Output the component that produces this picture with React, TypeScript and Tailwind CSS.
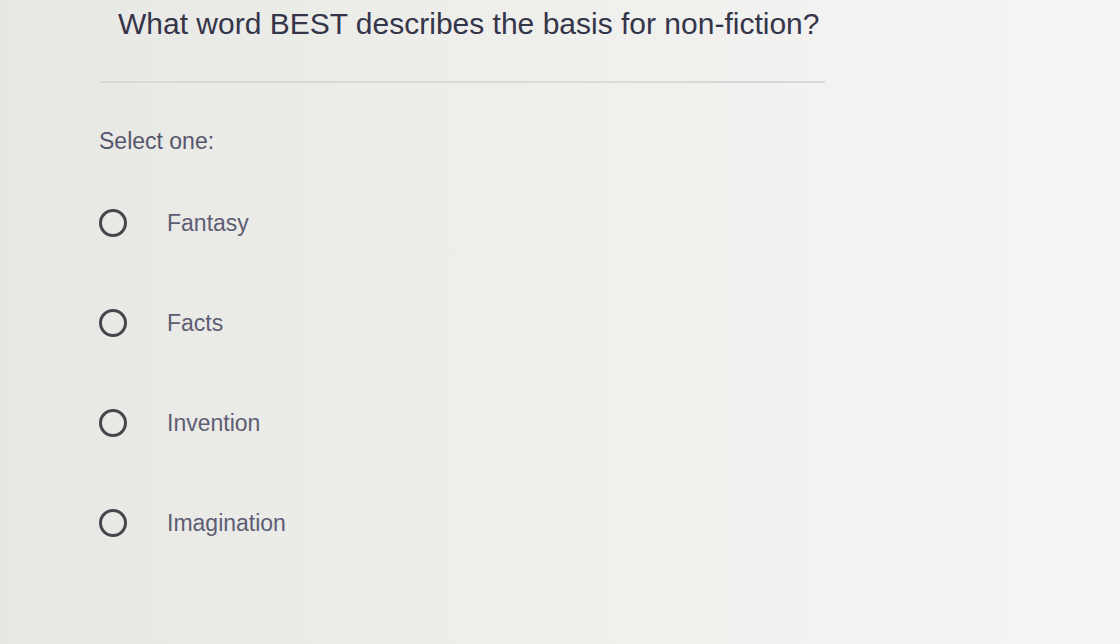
import React from 'react';

const options = ['Fantasy', 'Facts', 'Invention', 'Imagination'];

const Radio = () => (
  <span className="block w-[28px] h-[28px] rounded-full border-[3px] border-[#46464c] shrink-0" />
);

const App = () => {
  return (
    <div
      className="w-[1120px] h-[644px] overflow-hidden bg-linear-to-r from-[#e7e7e3] via-[#efefec] to-[#f6f5f5]"
      style={{ fontFamily: '"Liberation Sans", Arial, sans-serif' }}>
      <div className="w-[726px] ml-[99px]">
        <h1 className="pl-[19px] pt-[6px] text-[30px] leading-[36px] text-[#35354a] font-normal">
          What word BEST describes the basis for non-fiction?
        </h1>
        <div className="mt-[39px] h-[2px] bg-[#d9d9d8]" />
        <p className="mt-[44px] text-[23px] leading-[28px] text-[#56566c]">Select one:</p>
        <ul className="mt-[54px] flex flex-col gap-[72px]">
          {options.map(option => (
            <li key={option} className="flex items-center h-[28px]">
              <Radio />
              <span className="ml-[40px] text-[23px] leading-[28px] text-[#5d5d74]">{option}</span>
            </li>
          ))}
        </ul>
      </div>
    </div>
  );
};

export default App;
